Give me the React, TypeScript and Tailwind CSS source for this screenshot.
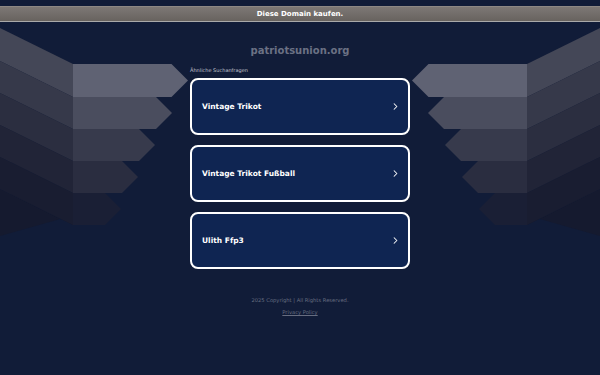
import { ChevronRight } from "lucide-react";

const searches = ["Vintage Trikot", "Vintage Trikot Fußball", "Ulith Ffp3"];

// stacked arrow boxes on both sides (background drawing)
const boxes = [
  { t: 64, b: 97, tip: 188, side: "#444757", face: "#5f6273" },
  { t: 97, b: 129, tip: 172, side: "#36394a", face: "#4a4d5e" },
  { t: 129, b: 161, tip: 155, side: "#2b2e40", face: "#373a4c" },
  { t: 161, b: 193, tip: 138, side: "#212437", face: "#2a2d40" },
  { t: 193, b: 225, tip: 121, side: "#191d31", face: "#1a1f35" },
];

const pts = (list: number[][], mirror: boolean) =>
  list.map(([x, y]) => `${mirror ? 600 - x : x},${y}`).join(" ");

const Arrows = ({ mirror }: { mirror: boolean }) => (
  <g>
    <polygon points={pts([[0, 189], [73, 225], [110, 205], [0, 236]], mirror)} fill="#151a2f" />
    {boxes.map((b) => (
      <polygon
        key={"s" + b.t}
        points={pts([[0, b.t - 36], [73, b.t], [73, b.b], [0, b.b - 36]], mirror)}
        fill={b.side}
      />
    ))}
    {boxes.map((b) => {
      const half = (b.b - b.t) / 2;
      return (
        <polygon
          key={"f" + b.t}
          points={pts(
            [[73, b.t], [b.tip - half, b.t], [b.tip, b.t + half], [b.tip - half, b.b], [73, b.b]],
            mirror
          )}
          fill={b.face}
        />
      );
    })}
  </g>
);

const App = () => {
  return (
    <div className="relative h-[375px] w-full overflow-hidden bg-[#111c38] font-['DejaVu_Sans',sans-serif]">
      <svg className="absolute inset-0" width="600" height="375" viewBox="0 0 600 375">
        <Arrows mirror={false} />
        <Arrows mirror={true} />
      </svg>

      <div className="relative flex flex-col items-center">
        <div className="mt-[6px] flex h-[16px] w-full items-center justify-center border-t border-b border-t-[#8d8884] border-b-[#a9a9a9] bg-gradient-to-b from-[#7d7875] to-[#68635f] text-[7px] font-bold text-white">
          Diese Domain kaufen.
        </div>

        <h1 className="mt-[23px] text-[10px] leading-[12px] font-bold text-[#6b7184]">
          patriotsunion.org
        </h1>

        <div className="mt-[10px] w-[220px]">
          <p className="text-[5px] leading-[6px] text-[#c3c7d0]">Ähnliche Suchanfragen</p>
          <div className="mt-[5px] flex flex-col gap-[10px]">
            {searches.map((s) => (
              <div
                key={s}
                className="flex h-[57px] items-center justify-between rounded-[8px] border-2 border-white bg-[#0f2552] pr-[7px] pl-[10px] text-[7.5px] font-bold text-white"
              >
                <span>{s}</span>
                <ChevronRight size={11} strokeWidth={2.2} />
              </div>
            ))}
          </div>
        </div>

        <p className="mt-[28px] text-[5.2px] leading-[6px] text-[#676d80]">
          2025 Copyright | All Rights Reserved.
        </p>
        <a className="mt-[6px] text-[5.2px] leading-[6px] text-[#676d80] underline">Privacy Policy</a>
      </div>
    </div>
  );
};

export default App;
